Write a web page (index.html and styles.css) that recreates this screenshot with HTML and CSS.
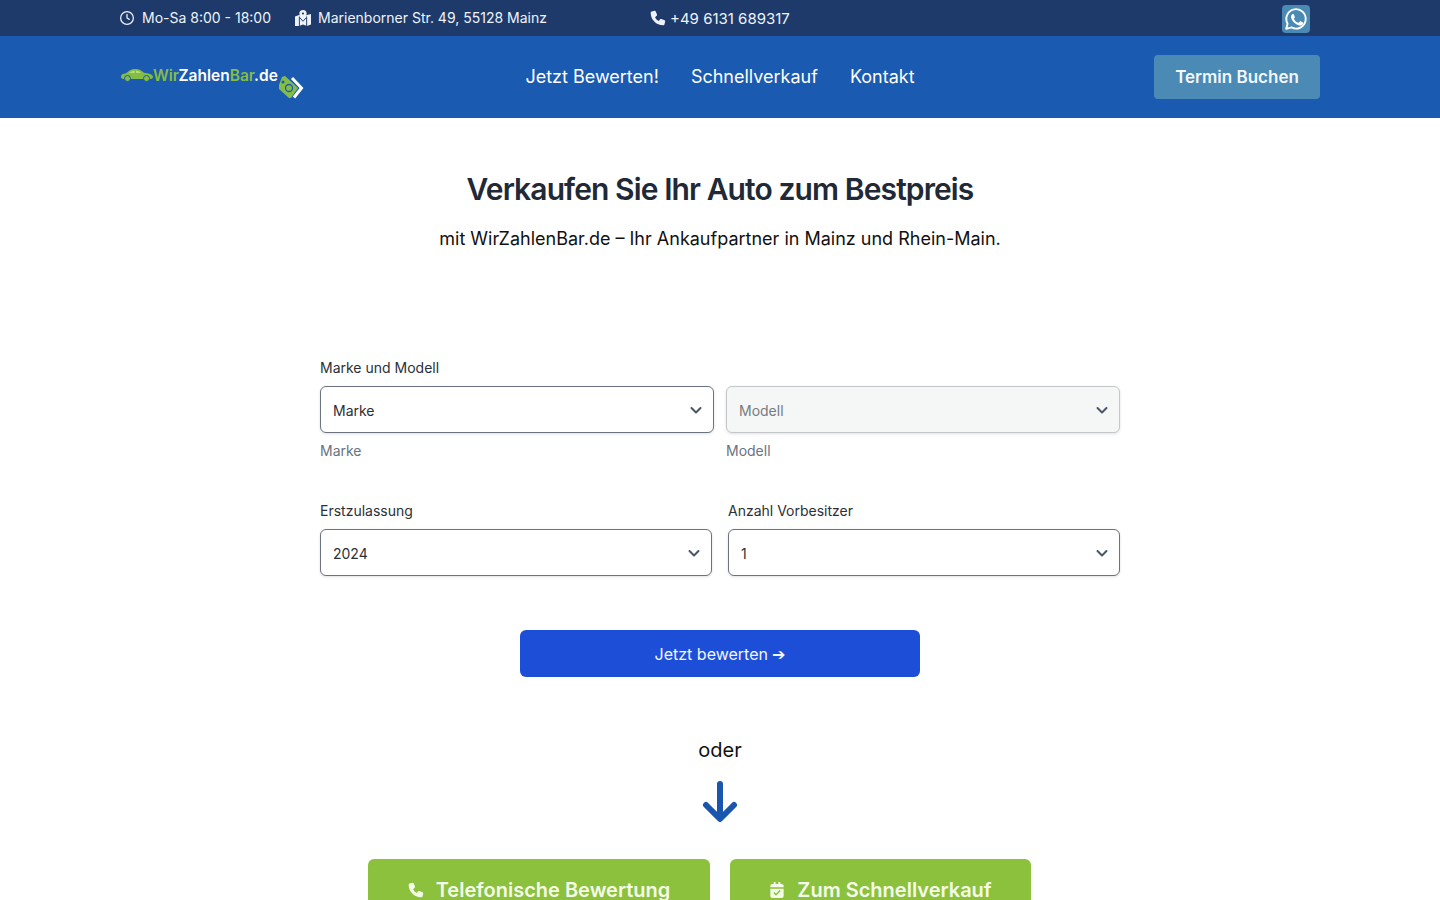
FILE: index.html
```html
<!DOCTYPE html>
<html lang="de">
<head>
  <meta charset="UTF-8">
  <meta name="viewport" content="width=device-width, initial-scale=1.0">
  <title>WirZahlenBar.de</title>
  <link rel="stylesheet" href="styles.css">
</head>
<body>
  <!-- Top bar -->
  <div class="topbar">
    <div class="topbar-inner">
      <div class="topbar-item hours">
        <svg class="top-icon clock-icon" viewBox="1 1 22 22" fill="none" stroke="currentColor" stroke-width="2" stroke-linecap="round" stroke-linejoin="round"><circle cx="12" cy="12" r="10"/><path d="M12 6.500V12l3.500 2.200"/></svg>
        Mo-Sa 8:00 - 18:00
      </div>
      <div class="topbar-item address">
        <svg class="top-icon map-icon" viewBox="1 1 22 22"><path d="M1 10l5.500-2L12 10l5.500-2L23 6.500V21l-5.500 2L12 21l-5.500 2L1 23z" fill="currentColor"/><path d="M12 1a5 5 0 0 0-5 5c0 2.800 3.200 6 5 8 1.800-2 5-5.200 5-8a5 5 0 0 0-5-5z" fill="currentColor"/><circle cx="12" cy="5.800" r="1.500" fill="#1e3a6b"/><path d="M7 10v13M17 10v13M7.500 11.500l4.500 5 4.500-5" fill="none" stroke="#1e3a6b" stroke-width="1.300"/></svg>
        Marienborner Str. 49, 55128 Mainz
      </div>
      <div class="topbar-item phone">
        <svg class="top-icon phone-icon" viewBox="0 0 24 24" fill="currentColor"><path d="M6.600 1.200 2.500 2.300C1.700 2.500 1 3.300 1 4.200 1 14.600 9.400 23 19.800 23c.9 0 1.700-.7 1.900-1.500l1.100-4.100c.2-.8-.2-1.700-1-2l-4.600-1.900c-.7-.3-1.600-.1-2.100.5L13.300 16.400c-3-1.500-4.300-3-5.700-5.700l2.400-1.900c.6-.5.800-1.400.5-2.100L8.600 2.200c-.3-.8-1.200-1.200-2-1z"/></svg>
        +49 6131 689317
      </div>
      <a class="whatsapp" href="#" aria-label="WhatsApp">
        <svg viewBox="0 0 24 24" fill="none"><path d="M2.200 21.800l1.400-5.100A9.700 9.700 0 1 1 7.400 20.400z" stroke="currentColor" stroke-width="1.900" stroke-linejoin="round"/><path d="M9.100 7.100c-.3 0-.7.100-1 .5-.4.400-1.100 1.100-1.100 2.500s1.100 2.900 1.200 3.100c.2.200 2.100 3.300 5.200 4.500 2.500 1 3.100.8 3.600.7.600-.1 1.800-.7 2-1.400.2-.7.200-1.300.2-1.400-.1-.1-.3-.2-.6-.4-.3-.2-1.800-.9-2.100-1-.3-.1-.5-.2-.7.200-.2.300-.8 1-1 1.200-.2.200-.4.200-.7.100-.3-.2-1.300-.5-2.500-1.500-.9-.8-1.500-1.800-1.700-2.100-.2-.3 0-.5.100-.6l.5-.6c.1-.2.200-.3.300-.5.100-.2 0-.4 0-.5-.1-.1-.7-1.700-.9-2.300-.3-.6-.5-.5-.7-.5z" fill="currentColor"/></svg>
      </a>
    </div>
  </div>

  <!-- Navigation -->
  <header class="navbar">
    <div class="navbar-inner">
      <a class="logo" href="#">
        <svg class="logo-car" viewBox="0 0 32 14"><path d="M0 8.500C0 6.700 2 5.700 5 5.300 7.500 3 10 1 14.500 1c3.500 0 6 1.700 8.500 3.700 4 .4 9 1.700 9 4.100 0 1.500-1 2.200-2.500 2.200H2C.7 11 0 10 0 8.500z" fill="#84bd45"/><circle cx="6.500" cy="10.500" r="3" fill="#84bd45" stroke="#1a5ab0"/><circle cx="25.500" cy="10.500" r="3" fill="#84bd45" stroke="#1a5ab0"/><path d="M8 5c2-1.600 3.800-2.600 5.500-2.600V5zM15 2.400c1.800 0 3.500 1.100 5 2.600h-5z" fill="#b5dd7a"/></svg>
        <span class="logo-text"><span class="logo-green">Wir</span>Zahlen<span class="logo-green">Bar</span>.de</span>
        <svg class="logo-tag" viewBox="0 0 36 32"><path d="M7 13l3-8 3-1 13 12-7 10-2 0-10-9z" fill="#84bd45"/><circle cx="11" cy="10" r="1.500" fill="#1a5ab0"/><circle cx="17" cy="16" r="3.500" fill="none" stroke="#1a5ab0" stroke-width="1.300"/><path d="M20 6l9.500 10L22 25.500" fill="none" stroke="#fff" stroke-width="3"/></svg>
      </a>
      <nav class="nav-links">
        <a href="#">Jetzt Bewerten!</a>
        <a href="#">Schnellverkauf</a>
        <a href="#">Kontakt</a>
      </nav>
      <a class="termin-btn" href="#">Termin Buchen</a>
    </div>
  </header>

  <main class="content">
    <h1>Verkaufen Sie Ihr Auto zum Bestpreis</h1>
    <p class="subtitle">mit WirZahlenBar.de – Ihr Ankaufpartner in Mainz und Rhein-Main.</p>

    <form class="valuation-form">
      <label class="field-label">Marke und Modell</label>
      <div class="form-row row-narrow-gap">
        <div class="field">
          <div class="select-wrap">
            <select><option>Marke</option></select>
            <svg class="chevron" viewBox="0 0 16 16"><path d="M3.500 6l4.500 4.500L12.500 6"/></svg>
          </div>
          <small>Marke</small>
        </div>
        <div class="field">
          <div class="select-wrap">
            <select disabled><option>Modell</option></select>
            <svg class="chevron" viewBox="0 0 16 16"><path d="M3.500 6l4.500 4.500L12.500 6"/></svg>
          </div>
          <small>Modell</small>
        </div>
      </div>

      <div class="form-row row-wide-gap">
        <div class="field">
          <label class="field-label">Erstzulassung</label>
          <div class="select-wrap">
            <select><option>2024</option></select>
            <svg class="chevron" viewBox="0 0 16 16"><path d="M3.500 6l4.500 4.500L12.500 6"/></svg>
          </div>
        </div>
        <div class="field">
          <label class="field-label">Anzahl Vorbesitzer</label>
          <div class="select-wrap">
            <select><option>1</option></select>
            <svg class="chevron" viewBox="0 0 16 16"><path d="M3.500 6l4.500 4.500L12.500 6"/></svg>
          </div>
        </div>
      </div>

      <button class="submit-btn" type="button">Jetzt bewerten ➔</button>
    </form>

    <p class="oder">oder</p>
    <svg class="down-arrow" viewBox="0 0 36 42" fill="none" stroke="#1a56ad" stroke-width="6" stroke-linecap="round" stroke-linejoin="round"><path d="M18 3v34M4 24l14 14 14-14"/></svg>

    <div class="cta-row">
      <a class="cta-btn cta-phone" href="#">
        <svg viewBox="0 0 24 24" fill="currentColor"><path d="M6.600 1.200 2.500 2.300C1.700 2.500 1 3.300 1 4.200 1 14.600 9.400 23 19.800 23c.9 0 1.700-.7 1.900-1.500l1.100-4.100c.2-.8-.2-1.700-1-2l-4.600-1.900c-.7-.3-1.600-.1-2.100.5L13.300 16.400c-3-1.500-4.300-3-5.700-5.700l2.400-1.900c.6-.5.800-1.400.5-2.100L8.600 2.200c-.3-.8-1.200-1.200-2-1z"/></svg>
        Telefonische Bewertung
      </a>
      <a class="cta-btn cta-sale" href="#">
        <svg viewBox="0 0 24 24" fill="currentColor"><path d="M7 0h3v3h4V0h3v3h2a3 3 0 0 1 3 3v2H2V6a3 3 0 0 1 3-3h2zM2 10h20v11a3 3 0 0 1-3 3H5a3 3 0 0 1-3-3zm15.500 3.500L16 12l-5.500 5.500-2.500-2.500-1.500 1.500 4 4z" fill-rule="evenodd"/></svg>
        Zum Schnellverkauf
      </a>
    </div>
  </main>
</body>
</html>
```

FILE: styles.css
```css
html, body {
  height: 100%;
}

body {
  margin: 0;
  height: 100vh;
  overflow: hidden;
  font-family: 'Inter', sans-serif;
  background: #fff;
  color: #212529;
}

a {
  color: inherit;
  text-decoration: none;
}

/* Top bar */
.topbar {
  height: 36px;
  background: #1e3a6b;
  color: #eef3fa;
  font-size: 14px;
}

.topbar-inner {
  width: 1200px;
  height: 100%;
  margin: 0 auto;
  display: flex;
  align-items: center;
}

.topbar-item {
  display: flex;
  align-items: center;
}

.top-icon {
  width: 14px;
  height: 14px;
  margin-right: 8px;
}

.map-icon {
  width: 16px;
  height: 16px;
  margin-right: 7px;
}

.hours {
  width: 175px;
  padding-bottom: 1px;
}

.address {
  width: 355px;
  padding-bottom: 1px;
}

.phone {
  font-size: 15px;
}

.phone-icon {
  width: 16px;
  height: 16px;
  margin-right: 4px;
}

.whatsapp {
  width: 28px;
  height: 28px;
  margin-left: auto;
  margin-right: 10px;
  margin-top: 1px;
  background: #4a8ab5;
  border-radius: 4px;
  color: #fff;
  display: flex;
  align-items: center;
  justify-content: center;
}

.whatsapp svg {
  width: 24px;
  height: 24px;
}

/* Navbar */
.navbar {
  height: 82px;
  background: #1a5ab0;
  color: #fff;
}

.navbar-inner {
  width: 1200px;
  height: 100%;
  margin: 0 auto;
  display: flex;
  align-items: center;
  justify-content: space-between;
}

.logo {
  display: flex;
  align-items: flex-start;
  width: 186px;
  height: 46px;
  padding-top: 14px;
  box-sizing: border-box;
  position: relative;
}

.logo-car {
  width: 32px;
  height: 14px;
  margin-left: 1px;
}

.logo-text {
  font-size: 15.5px;
  font-weight: 600;
  line-height: 16px;
}

.logo-green {
  color: #84bd45;
}

.logo-tag {
  width: 36px;
  height: 32px;
  position: absolute;
  left: 152px;
  top: 18px;
}

.nav-links {
  display: flex;
  gap: 32px;
  font-size: 18px;
  margin-left: -20px;
  padding-bottom: 2px;
}

.termin-btn {
  width: 166px;
  height: 44px;
  background: #4a8ab5;
  border-radius: 4px;
  color: #f2f7fc;
  font-size: 17px;
  font-weight: 600;
  display: flex;
  align-items: center;
  justify-content: center;
}

/* Main */
.content {
  text-align: center;
}

h1 {
  margin: 0;
  padding-top: 52px;
  font-size: 30px;
  line-height: 38px;
  font-weight: 600;
  letter-spacing: -0.9px;
  color: #1f2937;
}

.subtitle {
  margin: 17px 0 0;
  font-size: 18px;
  line-height: 28px;
  color: #111;
}

.valuation-form {
  width: 800px;
  margin: 105px auto 0;
  text-align: left;
}

.field-label {
  display: block;
  font-size: 14px;
  line-height: 20px;
  margin-bottom: 8px;
  color: #2b3038;
}

.form-row {
  display: flex;
}

.field {
  flex: 1;
}

.row-narrow-gap {
  gap: 12px;
}

.row-wide-gap {
  gap: 16px;
  margin-top: 40px;
}

.select-wrap {
  position: relative;
}

select {
  display: block;
  width: 100%;
  height: 47px;
  padding: 2px 36px 0 12px;
  appearance: none;
  background: #fff;
  border: 1px solid #6b7280;
  border-radius: 6px;
  box-shadow: 0 1px 3px rgba(0, 0, 0, 0.12);
  font-family: inherit;
  font-size: 14px;
  color: #2b3038;
}

select:disabled {
  background: #f5f6f6;
  border-color: #c4c7ca;
  color: #767c82;
  opacity: 1;
}

.chevron {
  position: absolute;
  right: 10px;
  top: 16px;
  width: 16px;
  height: 16px;
  fill: none;
  stroke: #4b5563;
  stroke-width: 2;
  stroke-linecap: round;
  stroke-linejoin: round;
  pointer-events: none;
}

small {
  display: block;
  margin-top: 8px;
  font-size: 14px;
  line-height: 20px;
  color: #6b7280;
}

.submit-btn {
  display: block;
  width: 400px;
  height: 47px;
  margin: 54px auto 0;
  border: none;
  border-radius: 6px;
  background: #1d4ed8;
  color: #f2f5fe;
  font-family: inherit;
  font-size: 16px;
  cursor: pointer;
}

.oder {
  margin: 59px 0 0;
  font-size: 20px;
  line-height: 28px;
  color: #111;
}

.down-arrow {
  display: block;
  width: 36px;
  height: 42px;
  margin: 17px auto 0;
}

.cta-row {
  display: flex;
  justify-content: center;
  gap: 20px;
  margin-top: 36px;
  padding-right: 41px;
}

.cta-btn {
  display: flex;
  align-items: center;
  justify-content: center;
  height: 62px;
  background: #8bc13c;
  border-radius: 6px 6px 0 0;
  color: #f5fbe9;
  font-size: 20px;
  font-weight: 600;
}

.cta-phone {
  width: 342px;
}

.cta-sale {
  width: 301px;
}

.cta-btn svg {
  width: 16px;
  height: 16px;
  margin-right: 12px;
}
```
